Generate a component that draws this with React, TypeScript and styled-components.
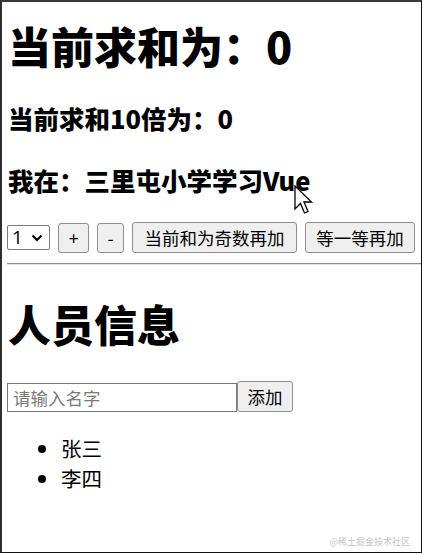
import React from "react";
import styled, { createGlobalStyle } from "styled-components";

const Global = createGlobalStyle`
  html, body { margin: 0; padding: 0; background: #ffffff; }
  body { font-family: "Noto Sans CJK SC", "Open Sans", sans-serif; color: #000; }
`;

const Frame = styled.div`
  position: relative;
  box-sizing: border-box;
  width: 422px;
  height: 553px;
  border-top: 2px solid #3a3a3a;
  border-left: 2px solid #2e2e2e;
  border-right: 1px solid #111;
  border-bottom: 1px solid #111;
  padding-left: 5px;
  overflow: hidden;
  background: #fff;
`;

const Title = styled.h1<{ $top: number }>`
  margin: ${(p) => p.$top}px 0 0 0;
  font-family: "Noto Sans CJK SC", "Open Sans", sans-serif;
  font-size: 43px;
  line-height: 48px;
  font-weight: 900;
  padding-left: 1px;
  white-space: nowrap;
`;

const SubTitle = styled.h3<{ $top: number }>`
  margin: ${(p) => p.$top}px 0 0 0;
  font-family: "Noto Sans CJK SC", "Open Sans", sans-serif;
  font-size: 25.5px;
  line-height: 30px;
  font-weight: 800;
  padding-left: 1px;
  white-space: nowrap;
`;

const Controls = styled.div`
  margin-top: 27px;
  display: flex;
  align-items: center;
  gap: 8px;
  height: 31px;
`;

const SelectWrap = styled.div`
  position: relative;
  width: 43px;
  height: 25px;
`;

const Select = styled.select`
  appearance: none;
  -webkit-appearance: none;
  box-sizing: border-box;
  width: 43px;
  height: 25px;
  margin: 0;
  padding: 0 0 0 4px;
  border: 1px solid #7a7a7a;
  border-radius: 2px;
  background: #fff;
  font-family: "Open Sans", "Noto Sans CJK SC", sans-serif;
  font-size: 19px;
  line-height: 23px;
  color: #000;
`;

const Chevron = styled.svg`
  position: absolute;
  right: 7px;
  top: 9px;
  width: 12px;
  height: 8px;
  pointer-events: none;
`;

const Button = styled.button<{ $w: number; $h?: number }>`
  box-sizing: border-box;
  width: ${(p) => p.$w}px;
  height: ${(p) => p.$h ?? 31}px;
  margin: 0;
  padding: 0;
  border: 1px solid #8d8d8d;
  border-radius: 3px;
  background: #efefef;
  font-family: "Noto Sans CJK SC", "Open Sans", sans-serif;
  font-size: 17.5px;
  line-height: 1;
  color: #000;
  display: flex;
  align-items: center;
  justify-content: center;
`;

const Rule = styled.hr`
  margin: 10px 0 0 0;
  width: 100%;
  height: 0;
  border: none;
  border-top: 1px solid #8e8e8e;
  border-bottom: 1px solid #e4e4e4;
`;

const AddRow = styled.div`
  margin-top: 34px;
  display: flex;
  align-items: flex-end;
  height: 31px;
`;

const NameInput = styled.input`
  box-sizing: border-box;
  width: 230px;
  height: 29px;
  margin: 0;
  padding: 0 5px;
  border: 1px solid #767676;
  border-radius: 0;
  font-family: "Noto Sans CJK SC", "Open Sans", sans-serif;
  font-size: 17.5px;
  color: #000;
  &::placeholder { color: #7a7a7a; }
`;

const List = styled.ul`
  margin: 21px 0 0 0;
  padding-left: 54px;
  list-style: disc;
`;

const Item = styled.li`
  font-family: "Noto Sans CJK SC", "Open Sans", sans-serif;
  font-size: 20.5px;
  line-height: 30px;
`;

const Watermark = styled.div`
  position: absolute;
  right: 11px;
  bottom: 4px;
  font-family: "Noto Sans CJK SC", sans-serif;
  font-size: 9px;
  line-height: 12px;
  color: #c4c4c4;
  white-space: nowrap;
`;

const Cursor = styled.svg`
  position: absolute;
  left: 291px;
  top: 183px;
  width: 24px;
  height: 32px;
  pointer-events: none;
`;

export default function App() {
  const people = ["张三", "李四"];
  return (
    <>
      <Global />
      <Frame>
        <Title $top={19}>当前求和为：0</Title>
        <SubTitle $top={34}>当前求和10倍为：0</SubTitle>
        <SubTitle $top={32}>我在：三里屯小学学习Vue</SubTitle>
        <Controls>
          <SelectWrap>
            <Select defaultValue="1">
              <option value="1">1</option>
              <option value="2">2</option>
              <option value="3">3</option>
            </Select>
            <Chevron viewBox="0 0 12 8">
              <path d="M1.5 1.5 L6 6 L10.5 1.5" fill="none" stroke="#000" strokeWidth="2" />
            </Chevron>
          </SelectWrap>
          <Button $w={31} $h={30}>+</Button>
          <Button $w={27} $h={30}>-</Button>
          <Button $w={165}>当前和为奇数再加</Button>
          <Button $w={110}>等一等再加</Button>
        </Controls>
        <Rule />
        <Title $top={34}>人员信息</Title>
        <AddRow>
          <NameInput placeholder="请输入名字" />
          <Button $w={56}>添加</Button>
        </AddRow>
        <List>
          {people.map((p) => (
            <Item key={p}>{p}</Item>
          ))}
        </List>
        <Watermark>@稀土掘金技术社区</Watermark>
        <Cursor viewBox="0 0 24 32">
          <path
            d="M2 1 L2 24 L7.5 18.5 L11.5 28 L15 26.5 L11 17 L18.5 17 Z"
            fill="#fff"
            stroke="#000"
            strokeWidth="1.3"
            strokeLinejoin="miter"
          />
        </Cursor>
      </Frame>
    </>
  );
}
